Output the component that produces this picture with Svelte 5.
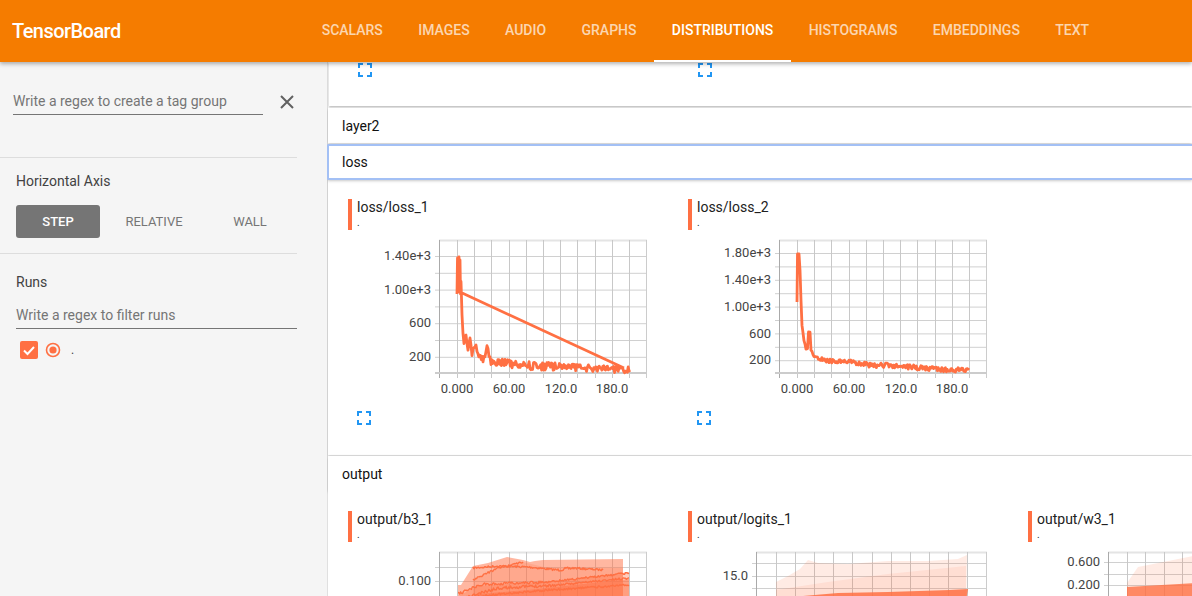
<script lang="ts">
  const tabs = ['Scalars', 'Images', 'Audio', 'Graphs', 'Distributions', 'Histograms', 'Embeddings', 'Text'];
  const orange = '#ff7043';

  // seeded noise so the runs look the same on every render
  function noisy(points: number[][], amp: number[], seed: number): string {
    let s = seed;
    const rnd = () => {
      s = (s * 16807) % 2147483647;
      return s / 2147483647 - 0.5;
    };
    const out: string[] = [];
    for (let i = 0; i < points.length - 1; i++) {
      const [x0, y0] = points[i];
      const [x1, y1] = points[i + 1];
      const n = Math.max(1, Math.round((x1 - x0) / 0.9));
      for (let j = 0; j < n; j++) {
        const t = j / n;
        const a = amp[i] ?? 0;
        out.push(`${(x0 + (x1 - x0) * t).toFixed(1)} ${(y0 + (y1 - y0) * t + rnd() * a).toFixed(1)}`);
      }
    }
    const last = points[points.length - 1];
    out.push(`${last[0]} ${last[1]}`);
    return 'M' + out.join('L');
  }

  const range = (start: number, step: number, count: number) =>
    Array.from({ length: count }, (_, i) => start + i * step);

  const stepLabels = [
    { x: 109, t: '0.000' },
    { x: 161, t: '60.00' },
    { x: 213, t: '120.0' },
    { x: 264, t: '180.0' }
  ];
  const stepGrid = range(109, 17.2, 11);

  const loss1 =
    'M109 62L109.5 26L110 58L111 25L111.5 60L112 28L112.5 62L113 50' +
    noisy(
      [[113, 50], [114, 84], [115, 100], [116, 110], [118, 102], [120, 118], [122, 104], [124, 122], [127, 112], [130, 124], [135, 128], [139, 116], [143, 128], [149, 130], [165, 133], [215, 135], [282, 138]],
      [1, 5, 5, 5, 5, 5, 5, 5, 6, 6, 6, 6, 10, 9, 8, 7],
      17
    ).replace('M', 'L') +
    'M112 60L276 136';

  const loss2 = noisy(
    [[109, 70], [109.5, 22], [111, 22], [112, 38], [113, 68], [114, 93], [116, 108], [118, 117], [119.5, 117], [120.5, 100], [122, 100], [123, 118], [127, 126], [132, 127], [142, 129], [160, 129], [172, 132], [182, 133], [212, 134], [242, 137], [281, 138]],
    [0, 0, 0, 0, 1, 1, 2, 1, 1, 0, 1, 3, 4, 4, 4, 4, 5, 5, 5, 5],
    41
  );

  const b3Lines = [
    noisy([[125, 36], [150, 24], [175, 18]], [2, 2], 5),
    noisy([[125, 24], [150, 22], [180, 23], [210, 26], [225, 24], [255, 26]], [2, 2, 2, 3, 2], 7),
    noisy([[110, 50], [135, 40], [200, 38], [281, 29]], [3, 3, 2], 9),
    noisy([[110, 56], [150, 44], [210, 41], [281, 34]], [3, 3, 2], 11),
    noisy([[130, 52], [200, 46], [281, 41]], [2, 2], 13)
  ];

  const tiles1 = [
    {
      title: 'loss/loss_1',
      left: 91,
      vgrid: stepGrid,
      hgrid: range(24, 16.8, 7),
      yLabels: [{ y: 24, t: '1.40e+3' }, { y: 58, t: '1.00e+3' }, { y: 91, t: '600' }, { y: 125, t: '200' }],
      right: 299,
      labelX: 83,
      xLabels: stepLabels,
      bands: [],
      lines: [{ d: loss1, w: 2.8 }]
    },
    {
      title: 'loss/loss_2',
      left: 91,
      vgrid: stepGrid,
      hgrid: range(21, 13.4, 9),
      yLabels: [{ y: 21, t: '1.80e+3' }, { y: 48, t: '1.40e+3' }, { y: 75, t: '1.00e+3' }, { y: 102, t: '600' }, { y: 128, t: '200' }],
      right: 299,
      labelX: 83,
      xLabels: stepLabels,
      bands: [],
      lines: [{ d: loss2, w: 2.8 }]
    }
  ];

  const tiles2 = [
    {
      title: 'output/b3_1',
      left: 91,
      vgrid: stepGrid,
      hgrid: [23, 37, 52],
      yLabels: [{ y: 37, t: '0.100' }],
      right: 299,
      labelX: 83,
      xLabels: [],
      bands: [
        { d: 'M110 41L113 41L125 22L140 19L159 13L175 16L182 18L187 17L195 16L275 15L275 70L110 70Z', o: 0.5 },
        { d: 'M125 36L150 25L175 18L200 24L275 24L275 70L125 70Z', o: 0.2 },
        { d: 'M110 52L130 42L160 40L220 36L281 28L281 70L110 70Z', o: 0.35 },
        { d: 'M110 58L130 50L180 46L281 35L281 70L110 70Z', o: 0.5 }
      ],
      lines: b3Lines.map((d) => ({ d, w: 1.4 }))
    },
    {
      title: 'output/logits_1',
      left: 68,
      vgrid: range(88, 19.1, 11),
      hgrid: [19, 32, 44],
      yLabels: [{ y: 32, t: '15.0' }, { y: 57, t: '5.00' }],
      right: 299,
      labelX: 60,
      xLabels: [],
      bands: [
        { d: 'M88 38L100 32L112 25L120 16L130 19L160 20L200 17L240 17L270 15L279 11L278 70L88 70Z', o: 0.14 },
        { d: 'M88 46L140 38L200 30L278 22L278 70L88 70Z', o: 0.1 },
        { d: 'M115 52L150 49L200 48L262 46L280 45L276 70L115 70Z', o: 0.85 }
      ],
      lines: []
    },
    {
      title: 'output/w3_1',
      left: 80,
      vgrid: range(99, 18.3, 13),
      hgrid: [18, 30, 41, 52],
      yLabels: [{ y: 18, t: '0.600' }, { y: 41, t: '0.200' }],
      right: 320,
      labelX: 72,
      xLabels: [],
      bands: [
        { d: 'M99 39L110 23L170 11L320 5L320 70L99 70Z', o: 0.14 },
        { d: 'M99 43L170 39L320 36L320 70L99 70Z', o: 0.8 }
      ],
      lines: []
    }
  ];
</script>

{#snippet expand()}
  <svg class="expand" width="14" height="14" viewBox="5 5 14 14">
    <path d="M7 14H5v5h5v-2H7v-3zm-2-4h2V7h3V5H5v5zm12 7h-3v2h5v-5h-2v3zM14 5v2h3v3h2V5h-5z" fill="#2196f3" />
  </svg>
{/snippet}

{#snippet tile(c)}
  <div class="tile">
    <div class="tile-head">
      <div class="tile-bar"></div>
      <div>
        <div class="tile-title">{c.title}</div>
        <div class="tile-run">.</div>
      </div>
    </div>
    <svg class="plot" width="320" height="170" viewBox="0 0 320 170">
      <rect x={c.left} y="7.5" width={c.right - c.left} height="2" fill="#e4e4e4" />
      {#each c.hgrid as y}
        <line x1={c.left - 4} x2={c.right} y1={y + 0.5} y2={y + 0.5} stroke="#d0d0d0" />
      {/each}
      {#each c.vgrid as x}
        <line x1={Math.round(x) + 0.5} x2={Math.round(x) + 0.5} y1="8" y2="146" stroke="#c8c8c8" />
      {/each}
      <line x1={c.left + 0.5} x2={c.left + 0.5} y1="8" y2="146" stroke="#aaa" />
      <line x1={c.right - 0.5} x2={c.right - 0.5} y1="8" y2="146" stroke="#ccc" />
      <rect x={c.left - 4} y="140" width={c.right - c.left + 4} height="2" fill="#ccc" />
      {#each c.bands as b}
        <path d={b.d} fill={orange} opacity={b.o} />
      {/each}
      {#each c.lines as l}
        <path d={l.d} fill="none" stroke={orange} stroke-width={l.w} stroke-linejoin="round" />
      {/each}
      {#each c.yLabels as l}
        <text class="tick" x={c.labelX} y={l.y - 0.5} dy=".35em" text-anchor="end">{l.t}</text>
      {/each}
      {#each c.xLabels as l}
        <text class="tick" x={l.x} y="156" dy=".35em" text-anchor="middle">{l.t}</text>
      {/each}
    </svg>
    {@render expand()}
  </div>
{/snippet}

<div class="page">
  <header>
    <div class="brand">TensorBoard</div>
    <nav>
      {#each tabs as t}
        <div class="tab" class:active={t === 'Distributions'}>{t}</div>
      {/each}
    </nav>
  </header>

  <div class="body">
    <aside>
      <div class="regex">
        <input class="field" placeholder="Write a regex to create a tag group" />
        <svg width="14" height="14" viewBox="0 0 14 14">
          <path d="M1 1L13 13M13 1L1 13" stroke="#616161" stroke-width="2" fill="none" />
        </svg>
      </div>
      <div class="section axis">
        <div class="label">Horizontal Axis</div>
        <div class="axis-btns">
          <div class="axis-btn selected">STEP</div>
          <div class="axis-btn">RELATIVE</div>
          <div class="axis-btn">WALL</div>
        </div>
      </div>
      <div class="section runs">
        <div class="label">Runs</div>
        <input class="field" placeholder="Write a regex to filter runs" />
        <div class="run">
          <div class="check">
            <svg width="18" height="18" viewBox="0 0 18 18">
              <path d="M4 9.5L7.5 13L14 6" stroke="#fff" stroke-width="2" fill="none" />
            </svg>
          </div>
          <svg width="16" height="16" viewBox="0 0 16 16">
            <circle cx="8" cy="8" r="6.5" fill="none" stroke={orange} stroke-width="1.6" />
            <circle cx="8" cy="8" r="3.6" fill={orange} />
          </svg>
          <span class="run-name">.</span>
        </div>
      </div>
    </aside>

    <main>
      <section class="card top-card">
        <div class="top-icons">
          <div>{@render expand()}</div>
          <div>{@render expand()}</div>
        </div>
      </section>
      <div class="row layer">layer2</div>
      <div class="row focused">loss</div>
      <div class="tiles loss-tiles">
        {#each tiles1 as c}
          {@render tile(c)}
        {/each}
      </div>
      <div class="row output">output</div>
      <div class="tiles">
        {#each tiles2 as c}
          {@render tile(c)}
        {/each}
      </div>
    </main>
  </div>
</div>

<style>
  :global(body) {
    margin: 0;
    overflow: hidden;
    font-family: Roboto, "Noto Sans", sans-serif;
  }
  .page {
    display: flex;
    flex-direction: column;
    height: 596px;
    overflow: hidden;
    background: #fff;
  }
  header {
    flex: none;
    position: relative;
    z-index: 2;
    display: flex;
    align-items: center;
    height: 62px;
    background: #f57c00;
    box-shadow: 0 2px 4px rgba(0, 0, 0, 0.3);
    color: #fff;
  }
  .brand {
    width: 304px;
    box-sizing: border-box;
    padding-left: 12px;
    font-size: 20px;
    font-weight: 500;
    letter-spacing: -0.55px;
  }
  nav {
    display: flex;
    align-self: stretch;
  }
  .tab {
    display: flex;
    align-items: center;
    box-sizing: border-box;
    padding: 0 17.7px;
    border-bottom: 2px solid transparent;
    font-size: 14px;
    font-weight: 500;
    text-transform: uppercase;
    color: rgba(255, 255, 255, 0.7);
  }
  .tab.active {
    color: #fff;
    border-bottom-color: #fff;
  }
  .body {
    flex: 1;
    display: flex;
    min-height: 0;
  }
  aside {
    flex: none;
    box-sizing: border-box;
    width: 328px;
    background: #f5f5f5;
    border-right: 1px solid #e0e0e0;
    color: #424242;
    font-size: 14px;
  }
  .regex {
    display: flex;
    align-items: center;
    gap: 17px;
    height: 95px;
    margin-right: 30px;
    padding: 0 0 0 13px;
    box-sizing: border-box;
  }
  .regex svg {
    flex: none;
    margin-top: -15px;
  }
  .regex .field {
    margin-top: -17px;
    width: 250px;
  }
  .field {
    display: block;
    box-sizing: border-box;
    height: 27px;
    padding: 0;
    border: 0;
    border-bottom: 1px solid #757575;
    background: transparent;
    font: 14px Roboto, sans-serif;
    outline: none;
  }
  .field::placeholder {
    color: #757575;
    opacity: 1;
  }
  .section {
    margin-right: 30px;
    padding-left: 16px;
    border-top: 1px solid #ddd;
  }
  .axis {
    height: 96px;
    box-sizing: border-box;
    padding-top: 15px;
  }
  .label {
    height: 17px;
    line-height: 17px;
  }
  .axis-btns {
    display: grid;
    grid-template-columns: 84px 108px 84px;
    margin-top: 15px;
  }
  .axis-btn {
    display: flex;
    align-items: center;
    justify-content: center;
    height: 33px;
    border-radius: 3px;
    font-size: 13px;
    color: #757575;
  }
  .axis-btn.selected {
    background: #757575;
    color: #fff;
    font-weight: 500;
  }
  .runs {
    padding-top: 20px;
  }
  .runs .field {
    width: 100%;
    margin-top: 11px;
  }
  .run {
    display: flex;
    align-items: center;
    height: 18px;
    margin: 12px 0 0 4px;
  }
  .check {
    width: 18px;
    height: 18px;
    margin-right: 7px;
    border-radius: 2px;
    background: #ff7043;
  }
  .check svg {
    display: block;
  }
  .run-name {
    margin-left: 10px;
    font-size: 12px;
  }
  main {
    flex: 1;
    min-width: 0;
    overflow: hidden;
    padding-left: 1px;
    margin-left: -1px;
    background: transparent;
  }
  .card {
    height: 44px;
    margin-left: 1px;
    box-sizing: border-box;
    background: #fff;
    box-shadow: 0 1px 2px rgba(0, 0, 0, 0.3);
  }
  .top-icons {
    display: grid;
    grid-template-columns: 340px 340px;
    padding: 1px 0 0 20px;
  }
  .row {
    box-sizing: border-box;
    display: flex;
    align-items: center;
    padding-left: 14px;
    font-size: 14px;
    color: #111;
    background: #fff;
    box-shadow: 0 1px 3px rgba(0, 0, 0, 0.22);
  }
  .layer {
    height: 35px;
    margin-top: 2px;
  }
  .focused {
    position: relative;
    height: 36px;
    margin: 1px 0 0 -1px;
    border: 2px solid #a3c0f5;
    border-right: 0;
    border-radius: 2px 0 0 2px;
    padding-left: 13px;
  }
  .output {
    height: 35px;
    margin-top: 1px;
  }
  .tiles {
    display: grid;
    grid-template-columns: repeat(3, 340px);
    padding: 20px 0 30px 20px;
    background: #fff;
  }
  .loss-tiles {
    height: 275px;
    box-sizing: border-box;
    padding-top: 19px;
    box-shadow: 0 1px 2px rgba(0, 0, 0, 0.2);
  }
  .tile-head {
    display: flex;
    gap: 5px;
    height: 31px;
  }
  .tile-bar {
    width: 4px;
    background: #ff7043;
  }
  .tile-title {
    font-size: 14px;
    line-height: 17px;
    color: #212121;
  }
  .tile-run {
    font-size: 10px;
    line-height: 14px;
    color: #212121;
  }
  .plot {
    display: block;
    margin-top: 2px;
    overflow: hidden;
  }
  .tick {
    font-size: 13px;
    fill: #444;
  }
  .expand {
    display: block;
    margin: 9px 0 0 9px;
  }
  .top-icons .expand {
    margin-top: 0;
  }
</style>
